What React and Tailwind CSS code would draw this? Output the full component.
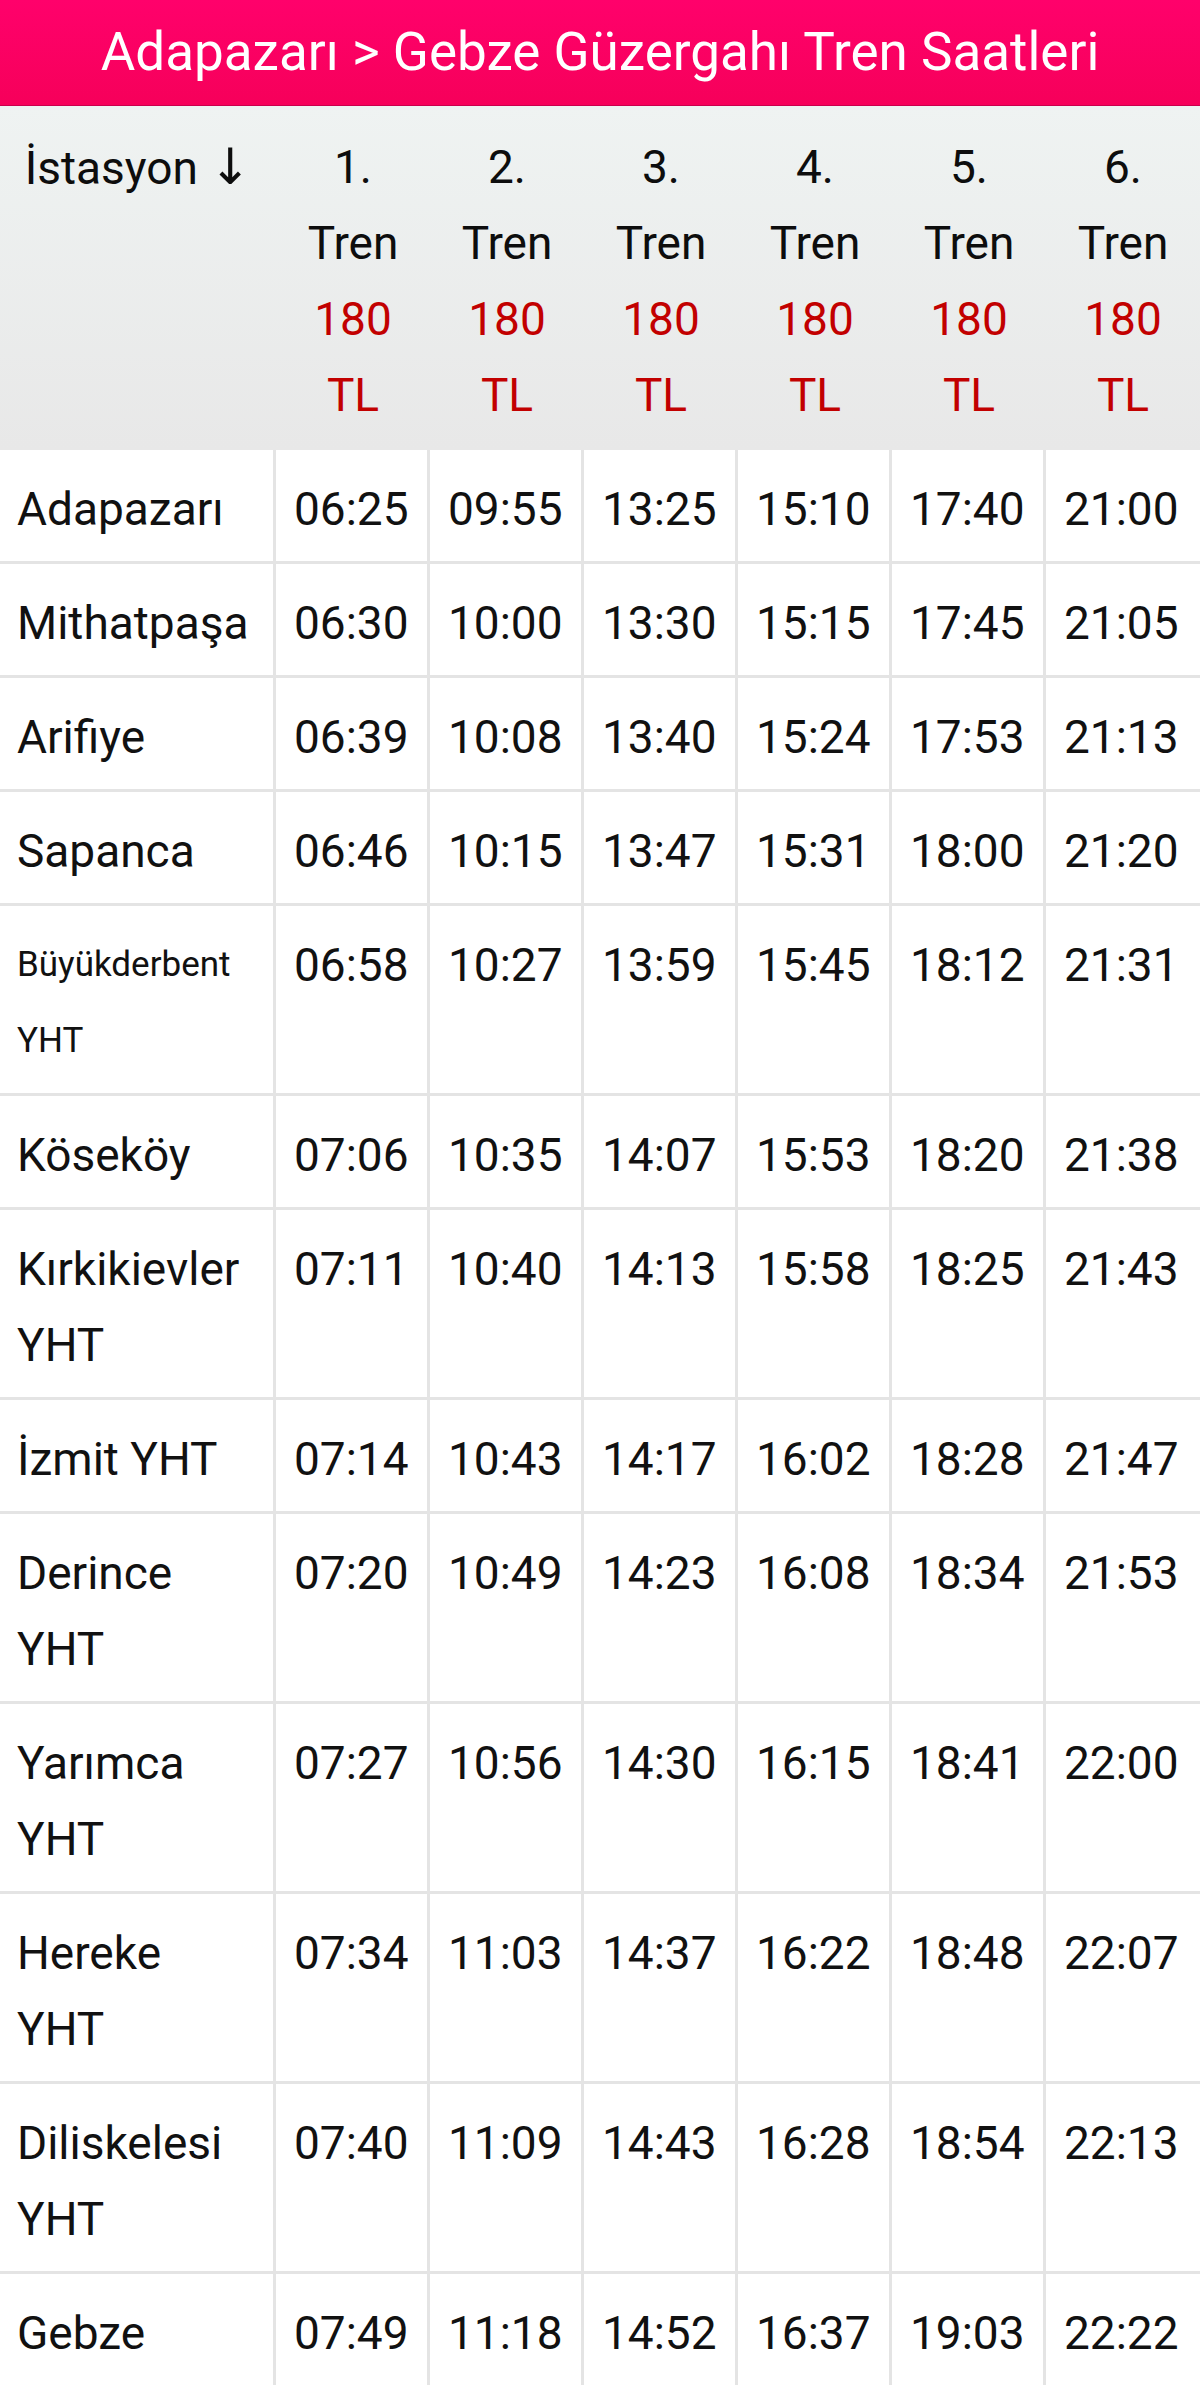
const trains = [1, 2, 3, 4, 5, 6];

const rows = [
  { name: ["Adapazarı"], times: ["06:25", "09:55", "13:25", "15:10", "17:40", "21:00"] },
  { name: ["Mithatpaşa"], times: ["06:30", "10:00", "13:30", "15:15", "17:45", "21:05"] },
  { name: ["Arifiye"], times: ["06:39", "10:08", "13:40", "15:24", "17:53", "21:13"] },
  { name: ["Sapanca"], times: ["06:46", "10:15", "13:47", "15:31", "18:00", "21:20"] },
  { name: ["Büyükderbent", "YHT"], small: true, times: ["06:58", "10:27", "13:59", "15:45", "18:12", "21:31"] },
  { name: ["Köseköy"], times: ["07:06", "10:35", "14:07", "15:53", "18:20", "21:38"] },
  { name: ["Kırkikievler", "YHT"], times: ["07:11", "10:40", "14:13", "15:58", "18:25", "21:43"] },
  { name: ["İzmit YHT"], times: ["07:14", "10:43", "14:17", "16:02", "18:28", "21:47"] },
  { name: ["Derince", "YHT"], times: ["07:20", "10:49", "14:23", "16:08", "18:34", "21:53"] },
  { name: ["Yarımca", "YHT"], times: ["07:27", "10:56", "14:30", "16:15", "18:41", "22:00"] },
  { name: ["Hereke", "YHT"], times: ["07:34", "11:03", "14:37", "16:22", "18:48", "22:07"] },
  { name: ["Diliskelesi", "YHT"], times: ["07:40", "11:09", "14:43", "16:28", "18:54", "22:13"] },
  { name: ["Gebze"], times: ["07:49", "11:18", "14:52", "16:37", "19:03", "22:22"] },
];

export default function App() {
  return (
    <div className="w-[1200px] bg-white font-['Roboto','Liberation_Sans',sans-serif] text-[#111]">
      <div className="h-[106px] flex items-center justify-center bg-linear-to-b from-[#ff016b] to-[#f6005a] border-b border-[#c9004c] text-white text-[53px] leading-none">
        Adapazarı &gt; Gebze Güzergahı Tren Saatleri
      </div>

      <table className="w-full table-fixed border-separate border-spacing-0">
        <colgroup>
          <col className="w-[276px]" />
          <col className="w-[154px]" />
          <col className="w-[154px]" />
          <col className="w-[154px]" />
          <col className="w-[154px]" />
          <col className="w-[154px]" />
          <col />
        </colgroup>
        <thead className="bg-linear-to-b from-[#eff3f2] to-[#e8e8e8]">
          <tr>
            <th className="align-top pt-[23px] pb-[17px] px-0 text-center font-normal text-[46px] leading-[76px] text-[#0d0d0d] whitespace-nowrap">
              İstasyon <span className="font-['DejaVu_Sans',sans-serif] text-[50px]">↓</span>
            </th>
            {trains.map(t => (
              <th key={t} className="align-top pt-[23px] pb-[17px] px-0 text-center font-normal text-[46px] leading-[76px]">
                <span className="block text-[#0d0d0d]">{t}.</span>
                <span className="block text-[#0d0d0d]">Tren</span>
                <span className="block text-[#c20000]">180</span>
                <span className="block text-[#c20000]">TL</span>
              </th>
            ))}
          </tr>
        </thead>
        <tbody>
          {rows.map((r, i) => {
            const last = i === rows.length - 1;
            return (
              <tr key={r.name.join(" ")}>
                <td className={(last ? "" : "border-b-[3px] ") + "border-r-[3px] border-[#e4e4e4] align-top pl-[17px] pr-2 pt-[21px] pb-[14px] leading-[76px] whitespace-nowrap " + (r.small ? "text-[35px]" : "text-[46px]")}>
                  {r.name.map(n => (
                    <span key={n} className="block">{n}</span>
                  ))}
                </td>
                {r.times.map((t, j) => (
                  <td key={j} className={(last ? "" : "border-b-[3px] ") + (j === 5 ? "" : "border-r-[3px] ") + "border-[#e4e4e4] align-top pl-[18px] pr-0 pt-[21px] pb-[14px] text-[46px] leading-[76px] whitespace-nowrap"}>
                    {t}
                  </td>
                ))}
              </tr>
            );
          })}
        </tbody>
      </table>
    </div>
  );
}
